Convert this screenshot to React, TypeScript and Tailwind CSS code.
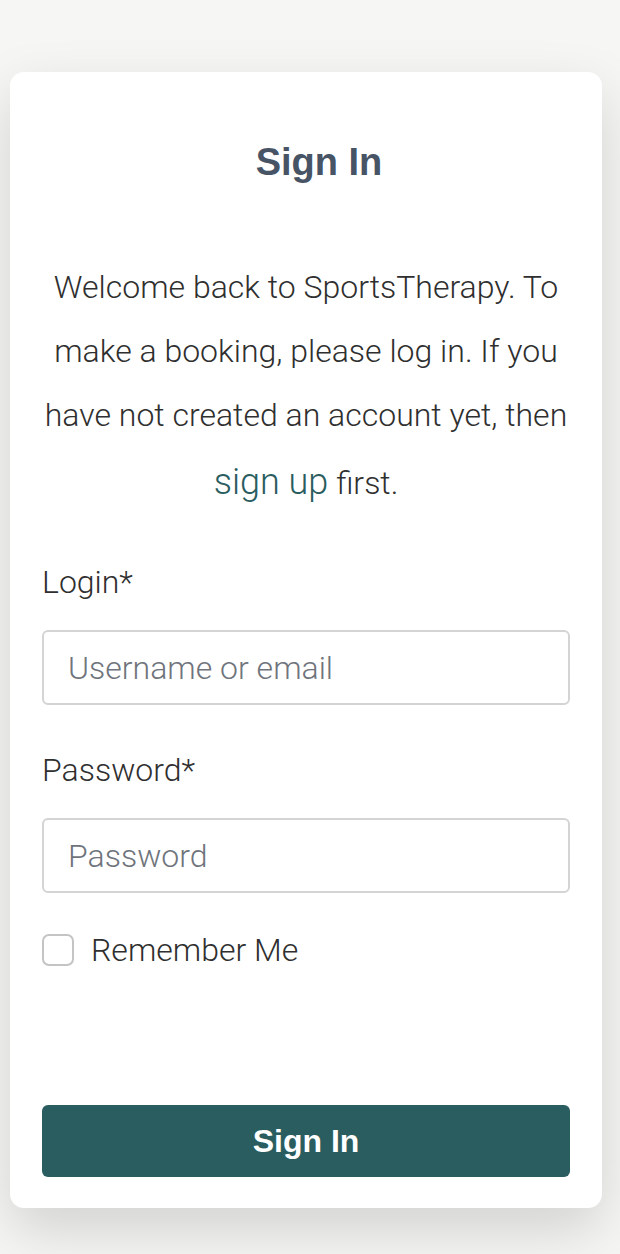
import React from "react";

function App() {
  return (
    <div className="min-h-[1254px] w-full bg-[#f6f6f4] pt-[72px] pb-[46px] font-['Roboto',sans-serif]">
      <div className="ml-[10px] w-[592px] rounded-[14px] bg-white px-[32px] pt-[68px] pb-[31px] shadow-[0_22px_56px_rgba(0,0,0,0.15)]">
        <h1 className="h-[44px] pl-[26px] text-center font-['Liberation_Sans',Arial,sans-serif] text-[38px] leading-[44px] font-bold text-[#475466]">
          Sign In
        </h1>
        <p className="mt-[71px] text-center text-[32px] leading-[64px] font-light text-[#2f2f2f]">
          Welcome back to SportsTherapy. To make a booking, please log in. If
          you have not created an account yet, then{" "}
          <a href="#" className="relative top-[3px] text-[36px] text-[#2a5d60]">
            sign up
          </a>{" "}
          <span className="relative top-[3px]">first.</span>
        </p>
        <form className="mt-[50px] flex flex-col">
          <label className="h-[40px] text-[32px] leading-[40px] font-light text-[#2f2f2f]">
            Login*
          </label>
          <input
            type="text"
            placeholder="Username or email"
            className="mt-[28px] h-[75px] w-full rounded-[6px] border-2 border-[#d4d4d4] px-[24px] text-[32px] font-light text-[#2f2f2f] placeholder:text-[#6f747c] outline-none"
          />
          <label className="mt-[45px] h-[40px] text-[32px] leading-[40px] font-light text-[#2f2f2f]">
            Password*
          </label>
          <input
            type="password"
            placeholder="Password"
            className="mt-[28px] h-[75px] w-full rounded-[6px] border-2 border-[#d4d4d4] px-[24px] text-[32px] font-light text-[#2f2f2f] placeholder:text-[#6f747c] outline-none"
          />
          <label className="mt-[41px] flex h-[32px] items-center gap-[17px]">
            <span className="h-[32px] w-[32px] rounded-[7px] border-2 border-[#c4c4c4] bg-white"></span>
            <span className="text-[32px] leading-[32px] font-light text-[#2f2f2f]">
              Remember Me
            </span>
          </label>
          <button
            type="button"
            className="mt-[139px] h-[72px] w-full rounded-[6px] bg-[#2a5d60] font-['Liberation_Sans',Arial,sans-serif] text-[32px] font-bold text-white"
          >
            Sign In
          </button>
        </form>
      </div>
    </div>
  );
}

export default App;
